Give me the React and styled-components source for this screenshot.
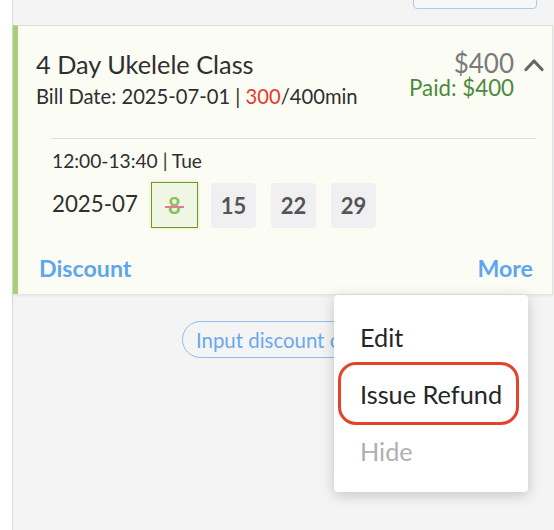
import React from "react";
import styled, { createGlobalStyle } from "styled-components";

const Global = createGlobalStyle`
  html, body { margin: 0; padding: 0; background: #fff; }
  body { font-family: Lato, "Open Sans", sans-serif; color: #333; }
  * { box-sizing: border-box; }
`;

const Page = styled.div`
  position: relative;
  display: flex;
  min-height: 530px;
  overflow: hidden;
`;

const Gutter = styled.div`
  width: 12px;
  flex: none;
  background: #fff;
`;

const Main = styled.div`
  flex: 1;
  min-height: 530px;
  background: #f4f4f4;
  border-left: 1px solid #d8d8d8;
`;

const TopBar = styled.div`
  height: 25px;
  display: flex;
  justify-content: flex-end;
  align-items: flex-start;
  padding-right: 17px;
`;

const GhostButton = styled.div`
  width: 124px;
  height: 32px;
  margin-top: -23px;
  border: 1px solid #a9c9ef;
  border-radius: 4px;
  background: #f7f7f7;
`;

const Card = styled.div`
  margin-right: 1px;
  background: #fbfdf4;
  border-left: 5px solid #a8cf76;
  border-top: 1px solid #dcdcdc;
  border-right: 1px solid #e2e2e2;
  box-shadow: 0 2px 3px rgba(0, 0, 0, 0.07);
  padding-bottom: 14px;
`;

const Header = styled.div`
  display: flex;
  justify-content: space-between;
  align-items: flex-start;
  padding: 24px 8px 0 18px;
`;

const TitleCol = styled.div`
  display: flex;
  flex-direction: column;
`;

const Title = styled.div`
  font-size: 25.3px;
  line-height: 28px;
  color: #2f2f2f;
`;

const BillLine = styled.div`
  margin-top: 6px;
  font-size: 20.2px;
  line-height: 24px;
  color: #2f2f2f;
`;

const Red = styled.span`
  color: #e8392b;
`;

const PriceCol = styled.div`
  display: flex;
  align-items: flex-start;
  gap: 10px;
`;

const Amounts = styled.div`
  display: flex;
  flex-direction: column;
  align-items: flex-end;
`;

const Price = styled.div`
  font-size: 26px;
  line-height: 26px;
  color: #7a7a7a;
`;

const Paid = styled.div`
  font-size: 22.3px;
  line-height: 24px;
  color: #4b8a3c;
`;

const Chevron = styled.svg`
  display: block;
  margin-top: 7px;
`;

const Schedule = styled.div`
  margin: 30px 16px 0 33px;
  border-top: 1px solid #dddddd;
  padding: 11px 0 0 1px;
`;

const TimeLine = styled.div`
  font-size: 19.2px;
  line-height: 22px;
  color: #2f2f2f;
`;

const DateRow = styled.div`
  margin-top: 10px;
  display: flex;
  align-items: center;
  gap: 13px;
`;

const Month = styled.div`
  flex: none;
  min-width: 85px;
  white-space: nowrap;
  font-size: 22.3px;
  line-height: 28px;
  color: #2f2f2f;
  margin-top: -3px;
`;

const Day = styled.div`
  flex: none;
  width: ${(p) => (p.$selected ? "47px" : "45px")};
  height: ${(p) => (p.$selected ? "46px" : "45px")};
  margin-right: ${(p) => (p.$selected ? "0" : "2px")};
  display: flex;
  align-items: center;
  justify-content: center;
  border-radius: ${(p) => (p.$selected ? "0" : "4px")};
  background: ${(p) => (p.$selected ? "#eff6e3" : "#f0f0f2")};
  border: ${(p) => (p.$selected ? "1px solid #6a9a3c" : "none")};
  box-shadow: ${(p) => (p.$selected ? "0 0 3px rgba(240, 205, 90, 0.7)" : "none")};
  font-size: 22px;
  font-weight: 700;
  color: ${(p) => (p.$selected ? "#8cc05b" : "#555")};
`;

const Struck = styled.span`
  position: relative;
  &::after {
    content: "";
    position: absolute;
    left: -3px;
    right: -3px;
    top: 52%;
    height: 2px;
    background: #e5789c;
  }
`;

const Footer = styled.div`
  margin-top: 28px;
  display: flex;
  justify-content: space-between;
  padding: 0 19px 0 21px;
`;

const LinkText = styled.div`
  font-size: 23.2px;
  line-height: 24px;
  font-weight: 700;
  color: #5ea6ee;
`;

const PillRow = styled.div`
  display: flex;
  padding: 27px 0 0 169px;
`;

const Pill = styled.div`
  height: 37px;
  display: flex;
  align-items: center;
  padding: 0 13px;
  border: 1px solid #8fbdf0;
  border-radius: 19px;
  font-size: 20.4px;
  color: #69a9ee;
  white-space: nowrap;
`;

const Menu = styled.div`
  position: absolute;
  left: 334px;
  top: 295px;
  width: 194px;
  height: 197px;
  background: #fff;
  border-radius: 4px;
  box-shadow: 0 3px 14px rgba(0, 0, 0, 0.2);
  padding-top: 13px;
`;

const MenuItem = styled.div`
  height: 57px;
  display: flex;
  align-items: center;
  padding-left: 26px;
  font-size: 25.3px;
  color: ${(p) => (p.$disabled ? "#b0b0b0" : "#262626")};
`;

const Highlight = styled.div`
  position: absolute;
  left: 4px;
  top: 67px;
  width: 181px;
  height: 63px;
  border: 3px solid #e4432b;
  border-radius: 18px;
`;

export default function App() {
  return (
    <>
      <Global />
      <Page>
        <Gutter />
        <Main>
          <TopBar>
            <GhostButton />
          </TopBar>
          <Card>
            <Header>
              <TitleCol>
                <Title>4 Day Ukelele Class</Title>
                <BillLine>
                  Bill Date: 2025-07-01 | <Red>300</Red>/400min
                </BillLine>
              </TitleCol>
              <PriceCol>
                <Amounts>
                  <Price>$400</Price>
                  <Paid>Paid: $400</Paid>
                </Amounts>
                <Chevron width="20" height="15" viewBox="0 0 20 15">
                  <polyline
                    points="2,12.5 10,4 18,12.5"
                    fill="none"
                    stroke="#666"
                    strokeWidth="3.2"
                    strokeLinecap="round"
                    strokeLinejoin="round"
                  />
                </Chevron>
              </PriceCol>
            </Header>
            <Schedule>
              <TimeLine>12:00-13:40 | Tue</TimeLine>
              <DateRow>
                <Month>2025-07</Month>
                <Day $selected>
                  <Struck>8</Struck>
                </Day>
                <Day>15</Day>
                <Day>22</Day>
                <Day>29</Day>
              </DateRow>
            </Schedule>
            <Footer>
              <LinkText>Discount</LinkText>
              <LinkText>More</LinkText>
            </Footer>
          </Card>
          <PillRow>
            <Pill>Input discount code</Pill>
          </PillRow>
        </Main>
        <Menu>
          <MenuItem>Edit</MenuItem>
          <MenuItem>Issue Refund</MenuItem>
          <MenuItem $disabled>Hide</MenuItem>
          <Highlight />
        </Menu>
      </Page>
    </>
  );
}
